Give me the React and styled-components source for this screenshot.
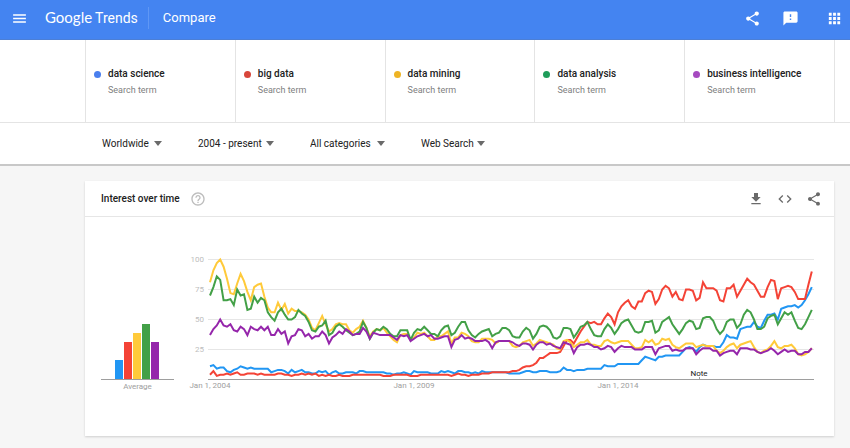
import React, { useState } from 'react';
import styled, { createGlobalStyle } from 'styled-components';
import {
  MdMenu,
  MdShare,
  MdFeedback,
  MdApps,
  MdGetApp,
  MdCode,
  MdHelpOutline,
} from 'react-icons/md';

const GlobalStyle = createGlobalStyle`
  * {
    box-sizing: border-box;
  }

  body {
    margin: 0;
    background: #f6f6f6;
    color: #212121;
    font-family: Roboto, "Liberation Sans", sans-serif;
    font-size: 10px;
  }
`;

// monthly values, January 2004 to October 2018
const series = [
  {
    term: 'data science',
    dot: '#4a7fee',
    color: '#2196f3',
    average: 19,
    values: [
      11, 12, 9, 10, 10, 7, 6, 8, 9, 11, 10, 9, 10, 9, 9, 9, 9, 9, 6, 7, 8, 8, 7, 5, 8, 6, 7, 8, 6,
      6, 5, 5, 7, 6, 7, 4, 6, 7, 5, 5, 6, 6, 6, 5, 7, 7, 6, 6, 6, 6, 6, 6, 5, 5, 4, 5, 5, 6,
      5, 4, 7, 6, 6, 6, 6, 5, 5, 5, 7, 6, 7, 6, 5, 7, 7, 6, 6, 5, 6, 5, 7, 6, 6, 6, 6, 6, 6,
      6, 5, 5, 5, 5, 6, 7, 7, 6, 6, 7, 7, 7, 6, 6, 6, 7, 10, 8, 8, 7, 8, 8, 8, 9, 9, 9, 9, 9, 12, 11,
      11, 11, 13, 13, 13, 13, 13, 13, 13, 16, 19, 18, 17, 16, 19, 19, 20, 20, 20, 20, 20, 23, 26, 27, 26, 23, 27, 29, 28,
      28, 28, 27, 27, 31, 37, 35, 35, 34, 42, 43, 44, 44, 48, 44, 43, 49, 54, 54, 55, 50, 59, 60, 61, 61, 62, 60, 62, 66, 71, 77,
    ],
  },
  {
    term: 'big data',
    dot: '#d8463b',
    color: '#f44336',
    average: 37,
    values: [
      4, 7, 3, 4, 4, 5, 4, 5, 6, 4, 4, 5, 5, 5, 4, 5, 4, 4, 4, 4, 5, 5, 4, 4, 3, 4, 4, 5, 4,
      5, 4, 5, 3, 4, 3, 4, 3, 3, 4, 3, 3, 3, 4, 4, 4, 4, 4, 4, 4, 4, 4, 3, 3, 3, 4, 4, 4, 4,
      4, 3, 3, 3, 4, 4, 4, 4, 4, 4, 4, 4, 4, 3, 4, 5, 4, 4, 3, 4, 4, 4, 5, 5, 5, 6, 6, 6, 6,
      6, 6, 7, 7, 8, 10, 11, 11, 12, 14, 18, 18, 20, 22, 22, 22, 23, 28, 33, 33, 30, 35, 40, 44, 48, 47, 48, 46, 46, 51, 55,
      52, 46, 56, 61, 64, 66, 61, 59, 65, 65, 72, 74, 73, 63, 67, 75, 78, 76, 69, 73, 67, 66, 75, 75, 74, 66, 68, 81, 76,
      76, 76, 74, 66, 65, 76, 76, 79, 69, 74, 79, 84, 81, 79, 74, 69, 69, 77, 83, 82, 67, 76, 77, 78, 77, 73, 67, 67, 67, 79, 90,
    ],
  },
  {
    term: 'data mining',
    dot: '#eeb425',
    color: '#ffca3a',
    average: 46,
    values: [
      81, 91, 97, 100, 94, 84, 72, 71, 80, 88, 82, 73, 66, 77, 79, 80, 69, 60, 56, 56, 64, 58, 63, 55, 59, 57, 57, 56, 54,
      50, 43, 41, 47, 53, 46, 40, 42, 46, 47, 46, 46, 41, 39, 42, 44, 49, 43, 36, 40, 42, 41, 43, 39, 36, 33, 31, 37, 38,
      38, 33, 35, 39, 38, 39, 36, 33, 33, 36, 36, 38, 40, 30, 35, 35, 39, 38, 36, 32, 31, 31, 34, 34, 34, 33, 30, 32, 32,
      32, 32, 28, 27, 28, 31, 32, 33, 28, 30, 33, 32, 31, 30, 29, 26, 25, 32, 33, 31, 27, 29, 31, 31, 33, 29, 29, 28, 28, 32, 33,
      31, 30, 31, 32, 32, 32, 29, 26, 26, 27, 33, 31, 33, 29, 30, 34, 33, 34, 29, 27, 26, 28, 30, 30, 30, 27, 28, 29, 28,
      28, 28, 24, 22, 24, 27, 29, 30, 26, 29, 30, 31, 32, 27, 23, 22, 24, 25, 28, 32, 27, 26, 28, 28, 29, 26, 21, 20, 21, 23, 26,
    ],
  },
  {
    term: 'data analysis',
    dot: '#1f9d5a',
    color: '#43a047',
    average: 55,
    values: [
      70, 77, 86, 83, 66, 66, 67, 62, 75, 70, 71, 58, 59, 69, 64, 68, 66, 56, 52, 49, 56, 59, 54, 50, 50, 52, 58, 55, 53,
      48, 41, 40, 44, 45, 49, 37, 39, 44, 46, 44, 41, 39, 37, 38, 40, 48, 43, 34, 39, 42, 41, 44, 42, 38, 36, 36, 41, 41,
      41, 33, 39, 42, 41, 44, 41, 38, 38, 36, 41, 44, 45, 37, 39, 44, 48, 48, 41, 37, 35, 38, 40, 41, 42, 36, 38, 39, 43,
      43, 41, 36, 35, 35, 40, 43, 41, 34, 38, 44, 45, 44, 41, 35, 34, 36, 43, 43, 42, 35, 39, 44, 45, 48, 42, 37, 36, 36, 42, 46,
      43, 38, 42, 47, 49, 50, 45, 40, 39, 40, 48, 48, 49, 39, 41, 48, 50, 52, 46, 42, 38, 42, 47, 49, 48, 42, 43, 51, 52,
      52, 49, 42, 38, 41, 48, 50, 50, 43, 46, 54, 58, 56, 50, 42, 42, 44, 51, 53, 54, 46, 51, 56, 54, 56, 49, 43, 42, 46, 52, 58,
    ],
  },
  {
    term: 'business intelligence',
    dot: '#a64ac0',
    color: '#9526ab',
    average: 37,
    values: [
      37, 42, 45, 50, 45, 44, 46, 41, 40, 44, 42, 37, 44, 42, 41, 44, 41, 44, 37, 37, 42, 38, 40, 30, 36, 37, 42, 41, 36,
      38, 34, 36, 36, 40, 37, 30, 35, 37, 40, 38, 42, 40, 37, 38, 38, 43, 40, 34, 39, 38, 37, 37, 37, 37, 35, 33, 37, 36,
      37, 32, 34, 36, 37, 38, 36, 37, 34, 34, 35, 36, 36, 27, 33, 34, 37, 34, 35, 34, 32, 32, 32, 33, 31, 26, 31, 32, 32,
      32, 32, 31, 29, 28, 30, 30, 29, 25, 29, 31, 31, 29, 30, 28, 27, 26, 31, 30, 29, 22, 27, 29, 29, 30, 29, 27, 27, 25, 26, 28,
      27, 23, 26, 28, 27, 27, 27, 25, 25, 25, 27, 27, 27, 21, 26, 27, 28, 28, 24, 25, 24, 24, 26, 26, 26, 21, 24, 26, 26,
      26, 24, 24, 20, 22, 23, 24, 24, 21, 26, 26, 26, 25, 25, 23, 22, 23, 24, 26, 24, 21, 23, 25, 23, 24, 24, 21, 21, 23, 23, 26,
    ],
  },
];

const filters = [
  { label: 'Location', width: 60, options: ['Worldwide', 'France'] },
  { label: 'Time range', width: 76, options: ['2004 - present', 'Past day'] },
  { label: 'Category', width: 75, options: ['All categories', 'Science'] },
  { label: 'Search type', width: 64, options: ['Web Search', 'News'] },
];

const TopBar = styled.header`
  display: flex;
  align-items: center;
  height: 40px;
  padding: 0 7px 3px 11px;
  background: #4484f1;
  border-bottom: 1px solid #4c7fd6;
  color: #fff;
`;

const IconButton = styled.button`
  display: flex;
  padding: 0;
  border: 0;
  background: none;
  color: inherit;
  font-size: ${(props) => props.$size || 17}px;
  cursor: pointer;
`;

const Logo = styled.a`
  display: flex;
  align-items: baseline;
  gap: 3px;
  margin-left: 17px;
  padding-bottom: 2px;
  color: #fff;
  font-family: Lato, sans-serif;
  font-size: 15px;
  line-height: 20px;
  text-decoration: none;
`;

const Product = styled.span`
  font-family: Roboto, sans-serif;
  font-size: 14px;
`;

const PageName = styled.h1`
  margin: 0 auto 0 10px;
  padding-left: 14px;
  border-left: 1px solid #5f97f5;
  font-size: 13px;
  font-weight: 400;
  line-height: 22px;
`;

const Actions = styled.div`
  display: flex;
  gap: ${(props) => props.$gap}px;
  margin-right: ${(props) => props.$after || 0}px;
`;

const Terms = styled.div`
  background: #fff;
  border-bottom: 1px solid #e4e4e4;
`;

const TermList = styled.ul`
  display: grid;
  grid-template-columns: repeat(5, 1fr);
  margin: 0 15px 0 85px;
  padding: 0;
  border-right: 1px solid #e4e4e4;
  list-style: none;
`;

const Term = styled.li`
  display: flex;
  gap: 7px;
  height: 82px;
  padding: 26px 0 0 8px;
  border-left: 1px solid #e4e4e4;
  line-height: 16px;
`;

const Dot = styled.span`
  width: 7px;
  height: 7px;
  margin-top: 5px;
  border-radius: 50%;
  background: ${(props) => props.color};
`;

const TermName = styled.div`
  font-size: 10px;
  font-weight: 500;
`;

const TermType = styled.div`
  color: #808080;
  font-size: 9px;
`;

const Filters = styled.div`
  display: flex;
  gap: 36px;
  padding: 12px 16px 12px 102px;
  background: #fff;
  border-bottom: 2px solid #c8c8c8;
`;

const FilterBox = styled.label`
  display: grid;
  align-items: center;
  width: ${(props) => props.$width}px;

  > * {
    grid-area: 1 / 1;
  }
`;

const Select = styled.select`
  width: 100%;
  height: 17px;
  padding: 0;
  border: 0;
  background: none;
  color: #212121;
  font: 10px Roboto, sans-serif;
  appearance: none;
`;

const Caret = styled.svg`
  justify-self: end;
  pointer-events: none;
`;

const Card = styled.section`
  margin: 15px 16px 12px 85px;
  background: #fff;
  box-shadow: 0 1px 2px rgba(0, 0, 0, 0.16);
`;

const CardHead = styled.div`
  display: flex;
  align-items: center;
  gap: 10px;
  height: 36px;
  padding: 0 12px 0 16px;
  border-bottom: 1px solid #e6e6e6;
  color: #6a6a6a;
`;

const CardTitle = styled.h2`
  margin: 0;
  color: #212121;
  font-size: 10px;
  font-weight: 500;
`;

const Help = styled.span`
  display: flex;
  flex: 1;
  color: #bdbdbd;
`;

const CardBody = styled.div`
  display: flex;
  align-items: flex-start;
  gap: 11px;
  padding: 33px 18px 36px 16px;
`;

const AverageChart = styled.div`
  width: 73px;
  padding-top: 60px;
  color: #9e9e9e;
  font-size: 8px;
  line-height: 14px;
  text-align: center;
`;

const Bars = styled.div`
  display: flex;
  align-items: flex-end;
  gap: 1px;
  height: 70px;
  padding-left: 14px;
  border-bottom: 1px solid #9e9e9e;
`;

const Bar = styled.div`
  width: 8px;
  background: ${(props) => props.color};
`;

const Plot = styled.svg`
  flex: 1;
  min-width: 0;
  height: auto;
  font-size: 8px;
`;

const left = 25;
const step = 3.4;
const yOf = (value) => 129.5 - value * 1.2;
const xOf = (month) => left + month * step;

function Filter({ label, width, options }) {
  const [value, setValue] = useState(options[0]);

  return (
    <FilterBox $width={width}>
      <Select aria-label={label} value={value} onChange={(e) => setValue(e.target.value)}>
        {options.map((option) => <option key={option}>{option}</option>)}
      </Select>
      <Caret width="8" height="5" viewBox="0 0 8 5">
        <path d="M0 0h8L4 5z" fill="#6a6a6a" />
      </Caret>
    </FilterBox>
  );
}

function LineChart() {
  return (
    <Plot viewBox="0 0 631 150" role="img" aria-label="Interest over time, 2004 to 2018">
      {[100, 75, 50, 25].map((tick) => (
        <g key={tick}>
          <path d={`M23 ${yOf(tick)}H629`} stroke="#e6e6e6" />
          <text x="19" y={yOf(tick) + 2.5} textAnchor="end" fill="#bdbdbd">{tick}</text>
        </g>
      ))}
      <path d="M23 129.5H629M514.5 129V127" stroke="#9e9e9e" />
      {[0, 60, 120].map((month) => (
        <text key={month} x={xOf(month)} y="138" textAnchor="middle" fill="#9e9e9e">
          {'Jan 1, ' + (2004 + month / 12)}
        </text>
      ))}
      {series.map((item) => (
        <polyline
          key={item.term}
          points={item.values.map((v, i) => xOf(i) + ',' + yOf(v)).join(' ')}
          fill="none"
          stroke={item.color}
          strokeWidth="2"
        />
      ))}
      <text x="514" y="126" textAnchor="middle" fill="#212121">Note</text>
    </Plot>
  );
}

function App() {
  return (
    <>
      <GlobalStyle />
      <TopBar>
        <IconButton aria-label="Menu"><MdMenu /></IconButton>
        <Logo href="#">
          <span>Google</span>
          <Product>Trends</Product>
        </Logo>
        <PageName>Compare</PageName>
        <Actions $gap={21} $after={27}>
          <IconButton aria-label="Share"><MdShare /></IconButton>
          <IconButton aria-label="Send feedback"><MdFeedback /></IconButton>
        </Actions>
        <IconButton aria-label="Apps"><MdApps /></IconButton>
      </TopBar>
      <Terms>
        <TermList>
          {series.map((item) => (
            <Term key={item.term}>
              <Dot color={item.dot} />
              <div>
                <TermName>{item.term}</TermName>
                <TermType>Search term</TermType>
              </div>
            </Term>
          ))}
        </TermList>
      </Terms>
      <Filters>
        {filters.map((filter) => <Filter key={filter.label} {...filter} />)}
      </Filters>
      <Card>
        <CardHead>
          <CardTitle>Interest over time</CardTitle>
          <Help><MdHelpOutline size={16} /></Help>
          <Actions $gap={13}>
            <IconButton $size={16} aria-label="Download"><MdGetApp /></IconButton>
            <IconButton $size={16} aria-label="Embed"><MdCode /></IconButton>
            <IconButton $size={16} aria-label="Share"><MdShare /></IconButton>
          </Actions>
        </CardHead>
        <CardBody>
          <AverageChart>
            <Bars>
              {series.map((item) => (
                <Bar key={item.term} color={item.color} style={{ height: item.average }} />
              ))}
            </Bars>
            Average
          </AverageChart>
          <LineChart />
        </CardBody>
      </Card>
    </>
  );
}

export default App;
